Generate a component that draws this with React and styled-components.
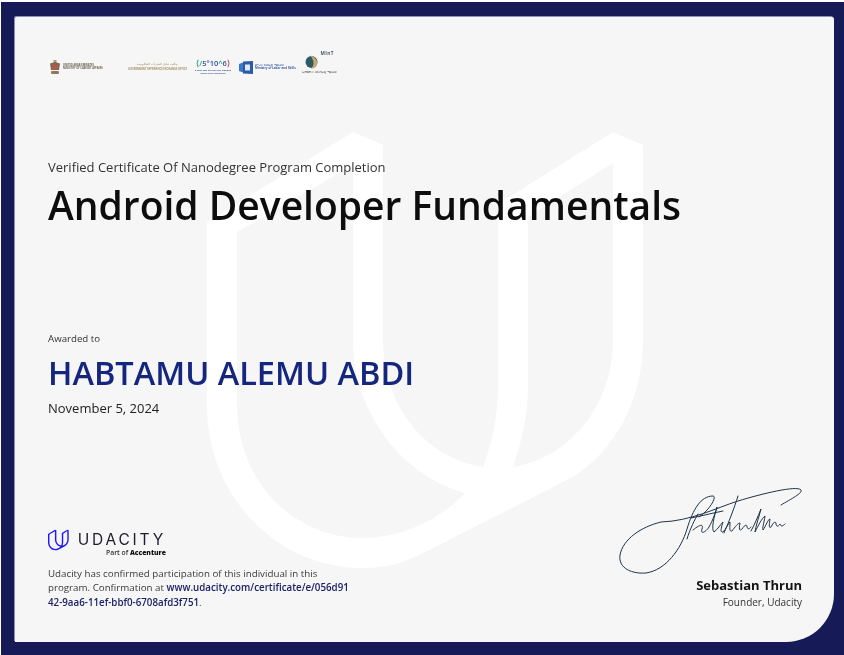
import React from "react";
import styled, { createGlobalStyle } from "styled-components";

const GlobalStyle = createGlobalStyle`
  html, body {
    margin: 0;
    padding: 0;
    background: #fff;
  }
  body {
    font-family: "Open Sans", "Noto Sans", sans-serif;
  }
`;

// same outline for the big watermark and the small logo
const U_SHAPE =
  "M207 222L353 132L383 145V340C383 405 425 458 483 467C493 440 498 415 498 385V204L613 132L643 145V340C643 400 615 450 573 477L423 553C405 563 385 568 363 568C275 568 207 495 207 405Z" +
  "M237 232L353 165V340C353 410 400 475 465 493C440 520 400 538 363 538C292 538 237 480 237 405Z" +
  "M528 217L613 163V340C613 405 570 458 513 467C522 440 528 415 528 385Z";

function Watermark() {
  return (
    <WatermarkSvg viewBox="0 0 844 655" width="844" height="655">
      <path d={U_SHAPE} fill="#fff" fillRule="evenodd" />
    </WatermarkSvg>
  );
}

function UdacityMark() {
  return (
    <svg width="22" height="22" viewBox="207 132 436 436">
      <path d={U_SHAPE} fill="#2015ff" fillRule="evenodd" />
    </svg>
  );
}

function Signature() {
  return (
    <svg width="186" height="90" viewBox="615 487 186 90" fill="none">
      <g stroke="#1f3347" strokeWidth="1" strokeLinecap="round" strokeLinejoin="round">
        <path d="M780 506C790 500 802 494 800 491C796 486 760 495 737 502C715 509 690 522 660 523C640 528 622 540 619 556C617 570 632 575 645 574C665 571 680 550 686 530C692 510 700 497 712 497C716 497 710 510 698 518" />
        <path d="M686 540C689 530 694 520 697 515M692 531C698 526 703 524 701 530C699 536 705 533 708 528C712 521 715 512 716 508C713 518 710 530 713 533C717 530 719 526 722 523C720 529 719 534 722 533C725 530 727 525 729 523C729 528 728 533 731 532C734 528 737 524 739 524C738 529 738 533 741 530C743 527 745 525 746 527C746 530 748 531 750 528" />
        <path d="M737 497C733 510 727 525 723 534" />
        <path d="M690 519C700 517 712 514 722 512" />
        <path d="M750 532C754 525 757 517 760 510C758 518 755 526 754 533C757 527 761 519 764 517C763 524 761 530 762 531C765 527 767 520 769 520C768 526 768 530 770 528C772 524 774 522 775 524C775 528 777 528 779 525C780 528 782 527 784 525" />
      </g>
    </svg>
  );
}

function Crest() {
  return (
    <svg width="12" height="15" viewBox="0 0 12 15">
      <rect x="4.5" y="0" width="3" height="3" fill="#b29b70" />
      <path d="M1 3.5L6 2L11 3.5L10 10H2Z" fill="#7a6a4e" />
      <rect x="3.5" y="4.5" width="5" height="5.5" fill="#b8534f" />
      <rect x="2" y="11" width="8" height="3" rx="1.2" fill="#8c7a58" />
    </svg>
  );
}

function SlashCode() {
  return (
    <CodeMark>
      <Green>⟨/</Green>
      <Blue>5°10</Blue>
      <Green>^</Green>
      <Blue>6</Blue>
      <Red>⟩</Red>
    </CodeMark>
  );
}

function LabourMark() {
  return (
    <svg width="14" height="13" viewBox="0 0 14 13">
      <path d="M0 3L4 1.4V11.6L0 10Z" fill="#3c76c4" />
      <path d="M4 0.6L14 0V13L4 12.4Z" fill="#2a5aa8" />
      <rect x="6" y="3.5" width="5" height="6" fill="#dfe8f4" />
    </svg>
  );
}

function MintMark() {
  return (
    <svg width="13" height="16" viewBox="0 0 13 16">
      <circle cx="6.5" cy="8" r="6" fill="#2d5c66" />
      <path d="M5 1.5C10 2.5 13 6.5 12 10.5C11 13.5 8 15 6 14.5C10 11.5 9 5.5 5 1.5Z" fill="#c9a869" />
    </svg>
  );
}

export default function App() {
  return (
    <>
      <GlobalStyle />
      <Frame>
        <Card>
          <Watermark />
          <Logos>
            <LogoGroup $width={73}>
              <Crest />
              <TinyText $color="#6d6352">
                UNITED ARAB EMIRATES
                <br />
                MINISTRY OF CABINET AFFAIRS
              </TinyText>
            </LogoGroup>
            <LogoStack $width={59}>
              <TinyText $color="#b3a17b" $center>مكتب تبادل الخبرات الحكومية</TinyText>
              <TinyText $color="#a3946f" $center>GOVERNMENT EXPERIENCE EXCHANGE OFFICE</TinyText>
            </LogoStack>
            <LogoStack $width={40}>
              <SlashCode />
              <TinyText $color="#2c4a9a" $center $size={2.4}>
                5 MILLION ETHIOPIAN CODERS
                <br />
                INITIATIVE PROGRAM
              </TinyText>
            </LogoStack>
            <LogoGroup $width={60}>
              <LabourMark />
              <TinyText $color="#3b5fa6" $size={3}>
                የሥራና ክህሎት ሚኒስቴር
                <br />
                Ministry of Labor and Skills
              </TinyText>
            </LogoGroup>
            <MintLogo>
              <MintName>MInT</MintName>
              <MintMark />
              <MintCaption>ኢኖቬሽንና ቴክኖሎጂ ሚኒስቴር</MintCaption>
            </MintLogo>
          </Logos>

          <Heading>
            <Eyebrow>Verified Certificate Of Nanodegree Program Completion</Eyebrow>
            <Title>Android Developer Fundamentals</Title>
          </Heading>

          <Award>
            <AwardLabel>Awarded to</AwardLabel>
            <Recipient>HABTAMU ALEMU ABDI</Recipient>
            <AwardDate>November 5, 2024</AwardDate>
          </Award>

          <Footer>
            <Confirmation>
              <Brand>
                <BrandRow>
                  <UdacityMark />
                  <BrandName>UDACITY</BrandName>
                </BrandRow>
                <PartOf>
                  Part of <strong>Accenture</strong>
                </PartOf>
              </Brand>
              <Note>
                Udacity has confirmed participation of this individual in this
                <br />
                program. Confirmation at <NoteLink>www.udacity.com/certificate/e/056d91</NoteLink>
                <br />
                <NoteLink>42-9aa6-11ef-bbf0-6708afd3f751</NoteLink>.
              </Note>
            </Confirmation>
            <Signer>
              <Signature />
              <SignerName>Sebastian Thrun</SignerName>
              <SignerRole>Founder, Udacity</SignerRole>
            </Signer>
          </Footer>
        </Card>
      </Frame>
    </>
  );
}

const Frame = styled.div`
  width: 843px;
  height: 653px;
  margin: 2px 0 0 1px;
  padding: 15px 10px 13px 14px;
  box-sizing: border-box;
  background: #161a57;
`;

const Card = styled.div`
  position: relative;
  height: 100%;
  box-sizing: border-box;
  padding: 35px 32px 32px 33px;
  display: flex;
  flex-direction: column;
  background: #f6f6f6;
  border-radius: 2px 2px 48px 0;
  box-shadow: -1px -1px 0 #8f90b5;
  color: #1c1c1c;
  filter: blur(0.25px);
`;

const WatermarkSvg = styled.svg`
  position: absolute;
  left: -15px;
  top: -17px;
`;

const Logos = styled.div`
  position: relative;
  height: 30px;
  padding-left: 1px;
  display: flex;
  align-items: center;
  gap: 6px;
  filter: blur(0.3px);
`;

const LogoGroup = styled.div`
  width: ${(p) => p.$width}px;
  display: flex;
  align-items: center;
  gap: 2px;
`;

const LogoStack = styled.div`
  width: ${(p) => p.$width}px;
  display: flex;
  flex-direction: column;
  align-items: center;
  gap: 1px;
`;

const MintLogo = styled.div`
  position: relative;
  width: 35px;
  margin-top: -5px;
  display: flex;
  flex-direction: column;
  align-items: flex-start;
`;

const TinyText = styled.div`
  font-size: ${(p) => p.$size || 2.6}px;
  line-height: 3.2px;
  font-weight: 700;
  white-space: nowrap;
  color: ${(p) => p.$color};
  text-align: ${(p) => (p.$center ? "center" : "left")};
`;

const MintCaption = styled.div`
  margin: 1px 0 0 -3px;
  font-size: 3px;
  line-height: 3.2px;
  font-weight: 700;
  white-space: nowrap;
  color: #5c6660;
`;

const CodeMark = styled.div`
  font-size: 7.5px;
  line-height: 9px;
  font-weight: 600;
  white-space: nowrap;
`;

const Green = styled.span`
  color: #2f9e6b;
`;

const Blue = styled.span`
  color: #3152a8;
`;

const Red = styled.span`
  color: #d2453f;
`;

const MintName = styled.div`
  position: absolute;
  top: -3px;
  right: 6px;
  font-size: 4.6px;
  line-height: 5px;
  font-weight: 700;
  letter-spacing: 0.5px;
  color: #4a5a5c;
`;

const Heading = styled.div`
  position: relative;
  margin-top: 75px;
`;

const Eyebrow = styled.div`
  font-size: 13px;
  line-height: 20px;
  color: #333;
`;

const Title = styled.h1`
  margin: 0;
  font-size: 39px;
  line-height: 56px;
  font-weight: 600;
  color: #0d0d0d;
  white-space: nowrap;
`;

const Award = styled.div`
  position: relative;
  margin-top: 98px;
`;

const AwardLabel = styled.div`
  font-size: 9.7px;
  line-height: 16px;
  color: #333;
`;

const Recipient = styled.div`
  margin-top: 4px;
  font-size: 32.5px;
  line-height: 44px;
  font-weight: 600;
  color: #14267d;
  white-space: nowrap;
`;

const AwardDate = styled.div`
  margin-top: 3px;
  font-size: 13px;
  line-height: 20px;
  color: #222;
`;

const Footer = styled.div`
  position: relative;
  margin-top: auto;
  display: flex;
  justify-content: space-between;
  align-items: flex-end;
`;

const Confirmation = styled.div`
  display: flex;
  flex-direction: column;
`;

const Brand = styled.div`
  width: 118px;
  display: flex;
  flex-direction: column;
`;

const BrandRow = styled.div`
  display: flex;
  align-items: center;
  gap: 9px;
`;

const BrandName = styled.div`
  font-family: "Inter", sans-serif;
  font-size: 15.5px;
  line-height: 20px;
  letter-spacing: 2.8px;
  color: #1d1d2b;
`;

const PartOf = styled.div`
  align-self: flex-end;
  margin-top: -3px;
  font-size: 6.8px;
  line-height: 9px;
  font-weight: 600;
  color: #333;

  strong {
    font-weight: 800;
    color: #111;
  }
`;

const Note = styled.p`
  margin: 10px 0 0;
  font-size: 9.75px;
  line-height: 14.5px;
  color: #3a3a3a;
  white-space: nowrap;
`;

const NoteLink = styled.span`
  font-weight: 600;
  color: #1c2266;
`;

const Signer = styled.div`
  margin-bottom: 1px;
  display: flex;
  flex-direction: column;
  align-items: flex-end;
`;

const SignerName = styled.div`
  font-size: 13px;
  line-height: 18px;
  font-weight: 700;
  color: #141414;
`;

const SignerRole = styled.div`
  margin-top: 1px;
  font-size: 10px;
  line-height: 14px;
  font-weight: 500;
  color: #333;
`;
